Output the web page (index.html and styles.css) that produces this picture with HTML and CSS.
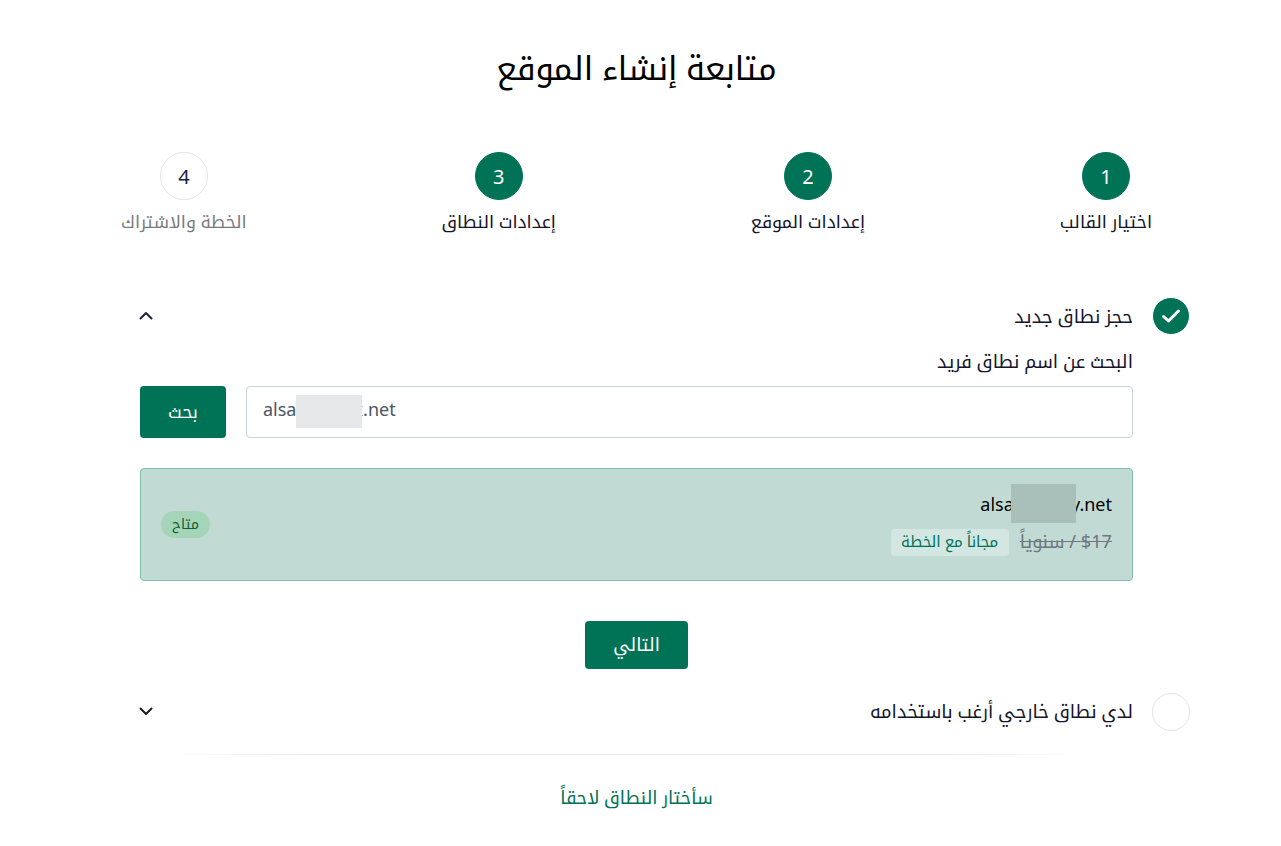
FILE: index.html
```html
<!DOCTYPE html>
<html lang="ar" dir="rtl">
<head>
    <meta charset="UTF-8" />
    <title>متابعة إنشاء الموقع</title>
    <link rel="stylesheet" href="styles.css">
</head>
<body>
    <div class="page">
        <h1 class="title">متابعة إنشاء الموقع</h1>

        <div class="stepper">
            <div class="step"><div class="step-num active">1</div><div class="step-label">اختيار القالب</div></div>
            <div class="step"><div class="step-num active">2</div><div class="step-label">إعدادات الموقع</div></div>
            <div class="step"><div class="step-num active">3</div><div class="step-label">إعدادات النطاق</div></div>
            <div class="step"><div class="step-num">4</div><div class="step-label muted">الخطة والاشتراك</div></div>
        </div>

        <div class="option first">
            <div class="option-head">
                <div class="radio checked">
                    <svg width="20" height="20" viewBox="0 0 20 20" fill="none"><path d="M2.5 10.5l5 4.5 10-10" stroke="#fff" stroke-width="3" stroke-linecap="round" stroke-linejoin="round"/></svg>
                </div>
                <div class="option-title">حجز نطاق جديد</div>
                <svg class="chevron" width="14" height="9" viewBox="0 0 14 9" fill="none"><path d="M1.5 7.5L7 2l5.5 5.5" stroke="#1c2340" stroke-width="2" stroke-linecap="round" stroke-linejoin="round"/></svg>
            </div>

            <div class="option-body">
                <label class="search-label" for="domain">البحث عن اسم نطاق فريد</label>
                <div class="search-row">
                    <div class="search-box">
                        <input id="domain" class="search-input" type="text" dir="ltr" value="alsaxxxxxxx.net" />
                        <span class="blur blur-input"></span>
                    </div>
                    <button class="btn btn-search">بحث</button>
                </div>

                <div class="result">
                    <div class="result-info">
                        <div class="result-name" dir="ltr">alsaxxxxxxy.net<span class="blur blur-result"></span></div>
                        <div class="result-price">
                            <span class="old-price">$17 / سنوياً</span>
                            <span class="free-tag">مجاناً مع الخطة</span>
                        </div>
                    </div>
                    <span class="badge">متاح</span>
                </div>

                <div class="next-row"><button class="btn btn-next">التالي</button></div>
            </div>
        </div>

        <div class="option second">
            <div class="option-head">
                <div class="radio"></div>
                <div class="option-title">لدي نطاق خارجي أرغب باستخدامه</div>
                <svg class="chevron" width="14" height="9" viewBox="0 0 14 9" fill="none"><path d="M1.5 1.5L7 7l5.5-5.5" stroke="#1a1a1a" stroke-width="2" stroke-linecap="round" stroke-linejoin="round"/></svg>
            </div>
        </div>

        <div class="divider"></div>

        <div class="later"><a href="#">سأختار النطاق لاحقاً</a></div>
    </div>
</body>
</html>
```

FILE: styles.css
```css
* {
    box-sizing: border-box;
}

html, body {
    margin: 0;
    background-color: #fff;
}

body {
    font-family: "Noto Sans", "Noto Kufi Arabic", sans-serif;
    color: #14142b;
    overflow: hidden;
}

.page {
    width: 1273px;
    height: 846px;
    margin-right: 8px;
    padding-top: 46px;
}

.title {
    margin: 0;
    font-size: 32.7px;
    font-weight: 400;
    line-height: 44px;
    text-align: center;
    color: #000;
}

/* Steps */
.stepper {
    display: flex;
    justify-content: space-between;
    margin: 62px 121px 0 121px;
}

.step {
    display: flex;
    flex-direction: column;
    align-items: center;
}

.step-num {
    width: 48px;
    height: 48px;
    border-radius: 50%;
    border: 1px solid #e4e4e7;
    display: flex;
    align-items: center;
    justify-content: center;
    font-size: 20px;
    color: #1c2340;
}

.step-num.active {
    background-color: #007256;
    border-color: #007256;
    color: #fff;
}

.step-label {
    margin-top: 7px;
    font-size: 17.7px;
    line-height: 28px;
    color: #14142b;
}

.step-label.muted {
    color: #7a7a80;
}

/* Accordion */
.option {
    margin-right: 140px;
    margin-left: 140px;
}

.option.first {
    margin-top: 62px;
}

.option.second {
    margin-top: 24px;
}

.option-head {
    display: flex;
    align-items: center;
    height: 38px;
    margin-right: -57px;
}

.radio {
    flex: none;
    width: 38px;
    height: 38px;
    border-radius: 50%;
    border: 1px solid #e4e4e7;
    margin-left: 19px;
    display: flex;
    align-items: center;
    justify-content: center;
}

.radio.checked {
    background-color: #007256;
    border-color: #fff;
}

.option-title {
    flex: 1;
    font-size: 18.4px;
    line-height: 28px;
    color: #14142b;
}

.second .option-title {
    padding-bottom: 2px;
}

.chevron {
    flex: none;
    margin-left: -1px;
    margin-bottom: 2px;
}

.option-body {
    margin-top: 12px;
}

.search-label {
    display: block;
    font-size: 18.4px;
    line-height: 28px;
    color: #14142b;
}

.search-row {
    display: flex;
    gap: 20px;
    margin-top: 11px;
    height: 52px;
}

.search-box {
    flex: 1;
    position: relative;
}

.search-input {
    width: 100%;
    height: 52px;
    padding: 0 16px 6px;
    border: 1px solid #cfd3da;
    border-radius: 4px;
    font-family: inherit;
    font-size: 18px;
    color: #4b5563;
    text-align: left;
    background-color: #fff;
    outline: none;
}

.blur {
    position: absolute;
    display: block;
}

.blur-input {
    left: 50px;
    top: 9px;
    width: 66px;
    height: 33px;
    background-color: #e6e7e8;
}

.btn {
    border: none;
    border-radius: 4px;
    background-color: #007256;
    color: #fff;
    font-family: inherit;
    font-weight: 400;
    font-size: 17.6px;
    cursor: pointer;
}

.btn-search {
    width: 86px;
}

.result {
    display: flex;
    align-items: flex-start;
    justify-content: space-between;
    margin-top: 30px;
    height: 113px;
    padding: 20px 20px 0;
    background-color: #c1dbd4;
    border: 1px solid #80c0ac;
    border-radius: 4px;
}

.result-name {
    position: relative;
    font-size: 18px;
    line-height: 30px;
    text-align: right;
    color: #000;
}

.blur-result {
    right: 36px;
    top: -5px;
    width: 65px;
    height: 39px;
    background-color: #a9bfb9;
}

.result-price {
    display: flex;
    align-items: center;
    gap: 11px;
    margin-top: 10px;
}

.old-price {
    font-size: 18.2px;
    line-height: 25px;
    margin-bottom: 2px;
    color: #6e7780;
    text-decoration: line-through;
}

.free-tag {
    padding: 0 10.5px;
    height: 27px;
    line-height: 25px;
    font-size: 15.2px;
    color: #007256;
    background-color: #d3e6e1;
    border-radius: 4px;
}

.badge {
    margin-top: 22px;
    width: 49px;
    height: 27px;
    line-height: 26px;
    border-radius: 14px;
    text-align: center;
    font-size: 14px;
    color: #0b5d30;
    background-color: #a5d5b9;
}

.next-row {
    display: flex;
    justify-content: center;
    margin-top: 40px;
}

.btn-next {
    width: 103px;
    height: 48px;
    font-size: 18px;
}

.divider {
    height: 1px;
    margin: 23px 184px 0 164px;
    background: linear-gradient(to right, #fff, #ececec 15%, #ececec 85%, #fff);
}

.later {
    margin-top: 27px;
    text-align: center;
    font-size: 18px;
    line-height: 30px;
}

.later a {
    color: #007256;
    text-decoration: none;
}
```
